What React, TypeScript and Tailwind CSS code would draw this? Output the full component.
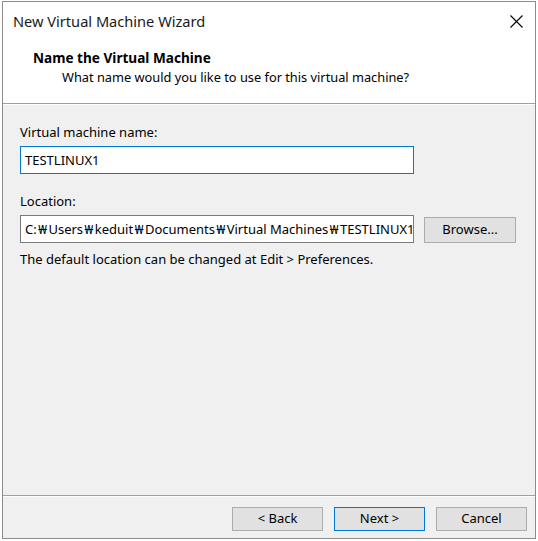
import React from "react";

const font = { fontFamily: '"Noto Sans", "Noto Sans CJK KR", sans-serif' };

function W() {
  return <span className="mx-[1.5px]">₩</span>;
}

export default function App() {
  return (
    <div className="w-[538px] h-[541px] bg-white pt-[1px] pl-[2px]" style={font}>
      <div className="w-[534px] h-[538px] border border-[#8c8c8c] flex flex-col bg-[#f0f0f0] text-[13px] text-black leading-[15px]">
        {/* title bar */}
        <div className="h-[38px] bg-white flex items-center justify-between pl-[10px] pr-[12px]">
          <span className="text-[14.6px] leading-[18px] text-[#1a1a1a]">New Virtual Machine Wizard</span>
          <svg width="13" height="13" viewBox="0 0 13 13" className="text-black">
            <path d="M0.5 0.5 L12.5 12.5 M12.5 0.5 L0.5 12.5" stroke="currentColor" strokeWidth="1.1" />
          </svg>
        </div>
        {/* header */}
        <div className="h-[63px] bg-white pt-[10px]">
          <div className="pl-[30px] font-bold text-[13.6px]">Name the Virtual Machine</div>
          <div className="pl-[59px] mt-[5px] text-[12.8px]">What name would you like to use for this virtual machine?</div>
        </div>
        <div className="h-[1px] bg-[#a0a0a0]" />
        <div className="h-[1px] bg-white" />
        {/* content */}
        <div className="flex-1 pl-[17px] pt-[20px]">
          <div>Virtual machine name:</div>
          <div className="mt-[6px] w-[394px] h-[28px] border border-[#0078d7] bg-white flex items-center pl-[4px]">
            TESTLINUX1
          </div>
          <div className="mt-[20px]">Location:</div>
          <div className="mt-[6px] flex items-start gap-[10px]">
            <div className="w-[394px] h-[28px] border border-[#7a7a7a] bg-white flex items-center pl-[4px] overflow-hidden whitespace-nowrap">
              <span className="whitespace-nowrap">
                C:<W />Users<W />keduit<W />Documents<W />Virtual Machines<W />TESTLINUX1
              </span>
            </div>
            <div className="mt-[2px] w-[92px] h-[26px] border border-[#adadad] bg-[#e1e1e1] flex items-center justify-center pb-[1px]">
              Browse...
            </div>
          </div>
          <div className="mt-[9px]">The default location can be changed at Edit &gt; Preferences.</div>
        </div>
        {/* footer */}
        <div className="h-[1px] bg-[#a0a0a0]" />
        <div className="h-[1px] bg-white" />
        <div className="h-[41px] flex justify-end items-start pt-[10px] pr-[8px] gap-[11px]">
          <div className="w-[91px] h-[24px] border border-[#adadad] bg-[#e1e1e1] flex items-center justify-center pb-[2px]">&lt; Back</div>
          <div className="w-[91px] h-[24px] border border-[#0078d7] bg-[#e1e1e1] flex items-center justify-center pb-[2px]">Next &gt;</div>
          <div className="w-[91px] h-[24px] border border-[#adadad] bg-[#e1e1e1] flex items-center justify-center pb-[2px]">Cancel</div>
        </div>
      </div>
    </div>
  );
}
